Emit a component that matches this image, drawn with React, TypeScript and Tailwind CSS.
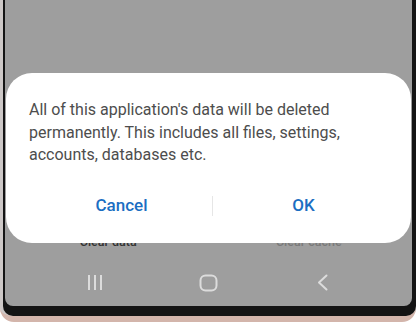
import React from "react";

export default function App() {
  return (
    <div className="w-[420px] h-[325px] bg-white overflow-hidden" style={{ fontFamily: "Roboto, 'Noto Sans', sans-serif" }}>
      <div className="w-[416px] h-[322px] bg-[#cdc8c7] border-b-[6px] border-[#d3b5ab] rounded-b-[14px] pl-[3px]">
        <div className="h-full bg-[#141414] rounded-b-[10px] pl-[2px] pr-[4px] pb-[10px]">
          <div className="h-full bg-[#9e9e9e] rounded-b-[8px] relative flex flex-col justify-end">
            <div className="grid grid-cols-2 h-[20px] mb-[7px] text-[12.5px] leading-[20px]">
              <div className="text-center text-[#333333] font-medium pl-[3px]">Clear data</div>
              <div className="text-center text-[#7a7a7a] font-medium pr-[3px]">Clear cache</div>
            </div>
            <div className="h-[47px] flex items-center justify-center">
              <div className="w-[114px] flex justify-center">
                <svg width="16" height="17" viewBox="0 0 16 17" fill="none" stroke="#dcdcdc" strokeWidth="2">
                  <path d="M2 1v15M8 1v15M14 1v15" />
                </svg>
              </div>
              <div className="w-[114px] flex justify-center">
                <svg width="19" height="18" viewBox="0 0 19 18" fill="none" stroke="#dcdcdc" strokeWidth="2">
                  <rect x="1.5" y="1.5" width="16" height="15" rx="5" />
                </svg>
              </div>
              <div className="w-[114px] flex justify-center">
                <svg width="11" height="17" viewBox="0 0 11 17" fill="none" stroke="#dcdcdc" strokeWidth="2" strokeLinecap="round" strokeLinejoin="round">
                  <path d="M9.5 1.5L2 8.5l7.5 7" />
                </svg>
              </div>
            </div>
            <div className="absolute left-[1px] right-[1px] top-[73px] h-[170px] rounded-[26px] bg-white">
              <p className="pt-[26px] px-[23px] text-[16px] leading-[22.5px] text-[#4d4d4d]">
                All of this application's data will be deleted permanently. This includes all files, settings, accounts, databases etc.
              </p>
              <div className="mt-[17px] h-[44px] flex items-center ml-[25px]">
                <div className="w-[181px] text-center text-[17px] font-medium text-[#1b6ec2]">Cancel</div>
                <div className="w-px h-[20px] bg-[#e6e6e6]" />
                <div className="w-[181px] text-center text-[17px] font-medium text-[#1b6ec2]">OK</div>
              </div>
            </div>
          </div>
        </div>
      </div>
    </div>
  );
}
